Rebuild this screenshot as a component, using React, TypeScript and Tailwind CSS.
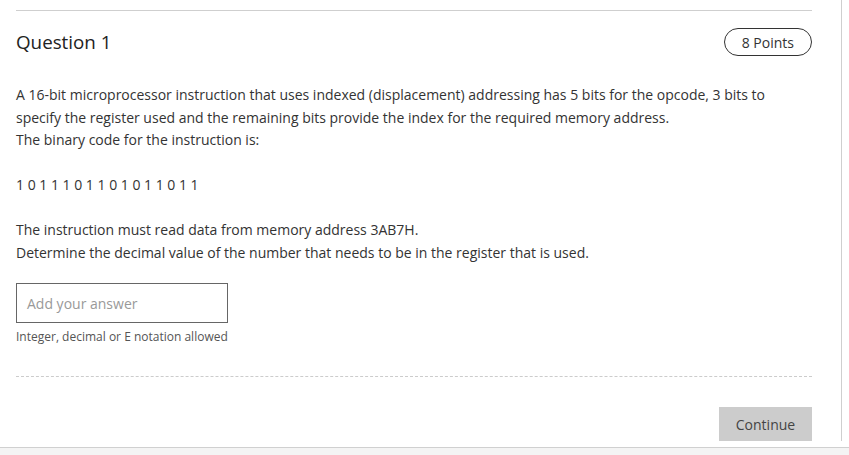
export default function App() {
  return (
    <div className="w-[849px] h-[455px] bg-[#f4f4f4] flex flex-col overflow-hidden" style={{ fontFamily: '"Open Sans", sans-serif' }}>
      <div className="flex bg-white h-[447px]">
        <div className="w-[842px] h-[441px] border-r border-[#cfcfcf] pl-4 pr-[29px] text-[#333]">
          <div className="mt-[10px] border-t border-[#cfcfcf]" />
          <div className="flex items-center justify-between pt-[17px]">
            <h1 className="text-[18.8px] leading-[28px] text-[#222]">Question 1</h1>
            <span className="h-[28px] px-[17px] flex items-center rounded-full border border-[#333] text-[14px] text-[#333]">8 Points</span>
          </div>
          <div className="mt-[28px] text-[14px] leading-[22.5px]">
            <p>A 16-bit microprocessor instruction that uses indexed (displacement) addressing has 5 bits for the opcode, 3 bits to specify the register used and the remaining bits provide the index for the required memory address.</p>
            <p>The binary code for the instruction is:</p>
            <p className="mt-[22.5px]">1 0 1 1 1 0 1 1 0 1 0 1 1 0 1 1</p>
            <p className="mt-[22.5px]">The instruction must read data from memory address 3AB7H.</p>
            <p>Determine the decimal value of the number that needs to be in the register that is used.</p>
          </div>
          <div className="mt-[19px] w-[212px] h-[40px] border border-[#666] flex items-center px-[10px] text-[14px] text-[#999]">Add your answer</div>
          <p className="mt-[6px] text-[12px] leading-[16px] text-[#555]">Integer, decimal or E notation allowed</p>
          <div className="mt-[31px] border-t border-dashed border-[#ccc]" />
          <div className="flex justify-end mt-[30px]">
            <button className="w-[93px] h-[34px] bg-[#cccccc] text-[14px] text-[#444]">Continue</button>
          </div>
        </div>
      </div>
      <div className="border-t border-[#d0d0d0] flex-1" />
    </div>
  );
}
